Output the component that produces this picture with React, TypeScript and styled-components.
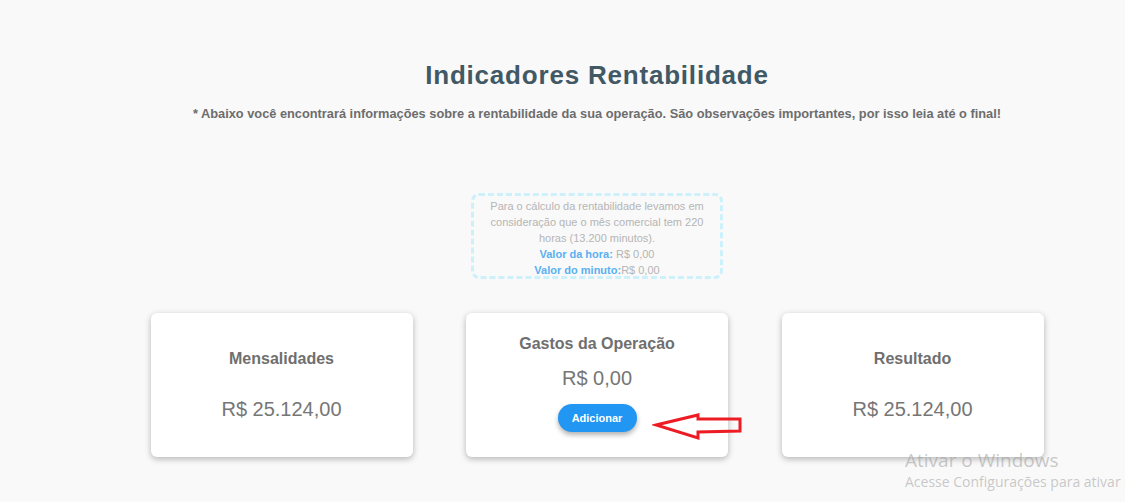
import styled, { createGlobalStyle } from 'styled-components';

const GlobalStyle = createGlobalStyle`
  html, body {
    margin: 0;
    padding: 0;
    background: #f9f9f9;
    font-family: "Liberation Sans", Arial, sans-serif;
  }
`;

const Page = styled.div`
  position: relative;
  height: 502px;
  overflow: hidden;
  padding-left: 69px;
  box-sizing: border-box;
`;

const Content = styled.main`
  display: flex;
  flex-direction: column;
  align-items: center;
  padding-top: 59px;
`;

const Title = styled.h1`
  margin: 0;
  font-size: 26px;
  line-height: 32px;
  font-weight: 700;
  letter-spacing: 0.8px;
  color: #415865;
`;

const Subtitle = styled.p`
  margin: 15px 0 0;
  font-size: 12.8px;
  line-height: 16px;
  font-weight: 700;
  color: #6d6d6d;
`;

const InfoBox = styled.div`
  margin-top: 71px;
  width: 252px;
  height: 86px;
  box-sizing: border-box;
  border: 3px dashed #cdf1fb;
  border-radius: 8px;
  padding: 2px 8px 0;
  text-align: center;
  font-size: 11px;
  line-height: 16px;
  color: #b5b5b5;
`;

const InfoLabel = styled.span`
  font-weight: 700;
  color: #5bb0f2;
`;

const CardRow = styled.section`
  display: flex;
  gap: 53.5px;
  margin-top: 34px;
`;

const Card = styled.div<{ $shift?: number }>`
  position: relative;
  width: 262px;
  height: 144px;
  box-sizing: border-box;
  padding-bottom: ${({ $shift = 0 }) => $shift}px;
  background: #fff;
  border-radius: 6px;
  box-shadow: 0 2px 6px rgba(0, 0, 0, 0.28);
  display: flex;
  flex-direction: column;
  align-items: center;
  justify-content: center;
`;

const CardTitle = styled.h3`
  margin: 0;
  font-size: 16px;
  line-height: 20px;
  font-weight: 700;
  color: #6f6f6f;
`;

const CardValue = styled.div<{ $gap: number }>`
  margin-top: ${({ $gap }) => $gap}px;
  font-size: 20px;
  line-height: 24px;
  color: #767676;
`;

const AddButton = styled.button`
  margin-top: 14px;
  width: 79px;
  height: 28px;
  border: none;
  border-radius: 14px;
  background: #2196f3;
  color: #fff;
  font-family: inherit;
  font-size: 11px;
  font-weight: 700;
  box-shadow: 0 3px 5px rgba(0, 0, 0, 0.3);
  cursor: pointer;
`;

const Arrow = styled.svg`
  position: absolute;
  left: 652px;
  top: 410px;
`;

const Watermark = styled.div`
  position: absolute;
  left: 905px;
  top: 449px;
  font-family: "Open Sans", "Noto Sans", sans-serif;
  color: rgba(150, 150, 150, 0.5);
  white-space: nowrap;
`;

const WatermarkTitle = styled.div`
  font-size: 19px;
  line-height: 22px;
`;

const WatermarkText = styled.div`
  margin-top: 2px;
  font-size: 14px;
  line-height: 18px;
`;

export default function App() {
  return (
    <Page>
      <GlobalStyle />
      <Content>
        <Title>Indicadores Rentabilidade</Title>
        <Subtitle>
          * Abaixo você encontrará informações sobre a rentabilidade da sua operação. São
          observações importantes, por isso leia até o final!
        </Subtitle>

        <InfoBox>
          Para o cálculo da rentabilidade levamos em consideração que o mês comercial tem 220
          horas (13.200 minutos).
          <br />
          <InfoLabel>Valor da hora:</InfoLabel> R$ 0,00
          <br />
          <InfoLabel>Valor do minuto:</InfoLabel>R$ 0,00
        </InfoBox>

        <CardRow>
          <Card>
            <CardTitle>Mensalidades</CardTitle>
            <CardValue $gap={28}>R$ 25.124,00</CardValue>
          </Card>
          <Card $shift={4}>
            <CardTitle>Gastos da Operação</CardTitle>
            <CardValue $gap={12}>R$ 0,00</CardValue>
            <AddButton>Adicionar</AddButton>
          </Card>
          <Card>
            <CardTitle>Resultado</CardTitle>
            <CardValue $gap={28}>R$ 25.124,00</CardValue>
          </Card>
        </CardRow>
      </Content>

      <Arrow width="96" height="34" viewBox="0 0 96 34">
        <path
          d="M4 15 L46 5 L46 9 L88 9 L88 21 L46 22 L46 28 Z"
          fill="none"
          stroke="#ed1c24"
          strokeWidth="3"
          strokeLinejoin="miter"
        />
      </Arrow>

      <Watermark>
        <WatermarkTitle>Ativar o Windows</WatermarkTitle>
        <WatermarkText>Acesse Configurações para ativar o Windows.</WatermarkText>
      </Watermark>
    </Page>
  );
}
